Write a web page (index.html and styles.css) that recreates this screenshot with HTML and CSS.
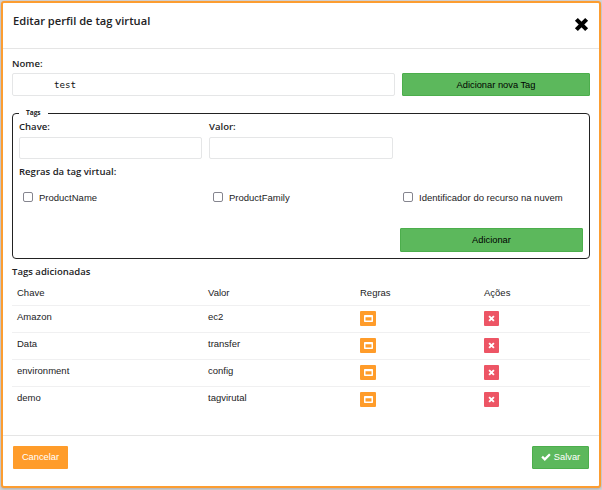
FILE: index.html
```html
<!DOCTYPE html>
<html lang="pt">
<head>
<meta charset="utf-8">
<title>Editar perfil de tag virtual</title>
<link rel="stylesheet" href="styles.css">
</head>
<body>
<svg width="0" height="0" class="defs">
  <symbol id="times" viewBox="0 0 12 12"><path d="M1.900 1.900l8.200 8.200M10.100 1.900l-8.200 8.200" fill="none" stroke="currentColor" stroke-width="3.300"/></symbol>
  <symbol id="window" viewBox="0 0 9 8"><path fill-rule="evenodd" fill="currentColor" d="M.8 0h7.400q.8 0 .8.8v5.400q0 .8-.8.8H.8Q0 7 0 6.200V.8Q0 0 .8 0zM1.500 2.300v3.200h6V2.300z"/></symbol>
  <symbol id="check" viewBox="0 0 10 8"><path d="M1.100 3.700l2.700 2.600L8.900 1.200" fill="none" stroke="currentColor" stroke-width="2.300"/></symbol>
</svg>
<div class="modal">
  <header class="modal-header">
    <h1>Editar perfil de tag virtual</h1>
    <button class="close" aria-label="Fechar"><svg><use href="#times"/></svg></button>
  </header>
  <main class="modal-body">
    <label class="label name-label">Nome:</label>
    <div class="name-row">
      <input class="input name" value="test">
      <button class="btn green wide">Adicionar nova Tag</button>
    </div>
    <fieldset class="tags">
      <legend>Tags</legend>
      <div class="fields">
        <label class="label">Chave:<input class="input"></label>
        <label class="label">Valor:<input class="input"></label>
      </div>
      <div class="label rules-label">Regras da tag virtual:</div>
      <div class="rules">
        <label><input type="checkbox"><span>ProductName</span></label>
        <label><input type="checkbox"><span>ProductFamily</span></label>
        <label><input type="checkbox"><span>Identificador do recurso na nuvem</span></label>
      </div>
      <button class="btn green add">Adicionar</button>
    </fieldset>
    <h2 class="label">Tags adicionadas</h2>
    <div class="table">
      <div class="row head"><span>Chave</span><span>Valor</span><span>Regras</span><span>Ações</span></div>
      <div class="row"><span>Amazon</span><span>ec2</span><button class="icon orange"><svg><use href="#window"/></svg></button><button class="icon red"><svg><use href="#times"/></svg></button></div>
      <div class="row"><span>Data</span><span>transfer</span><button class="icon orange"><svg><use href="#window"/></svg></button><button class="icon red"><svg><use href="#times"/></svg></button></div>
      <div class="row"><span>environment</span><span>config</span><button class="icon orange"><svg><use href="#window"/></svg></button><button class="icon red"><svg><use href="#times"/></svg></button></div>
      <div class="row"><span>demo</span><span>tagvirutal</span><button class="icon orange"><svg><use href="#window"/></svg></button><button class="icon red"><svg><use href="#times"/></svg></button></div>
    </div>
  </main>
  <footer class="modal-footer">
    <button class="btn orange cancel">Cancelar</button>
    <button class="btn green save"><svg><use href="#check"/></svg>Salvar</button>
  </footer>
</div>
</body>
</html>
```
FILE: styles.css
```css
* { box-sizing: border-box; }
body { margin: 0; padding: 1px; height: 490px; overflow: hidden; background: #d6d6d8; font: 9.5px/12px "Liberation Sans", sans-serif; color: #222224; }
.defs { display: none; }
button, input { font: inherit; margin: 0; padding: 0; }
h1, h2 { margin: 0; }
svg { display: block; }
.modal { width: 600px; height: 487px; border: 2px solid #fc9d31; border-radius: 3px; background: #fff; display: flex; flex-direction: column; box-shadow: 0 1px 3px #aaa; }
.modal-header { height: 46px; flex: none; border-bottom: 1px solid #e5e5e5; display: flex; justify-content: space-between; padding: 10px 10px 0; }
h1 { font: 600 11.15px/16px "Open Sans", sans-serif; white-space: nowrap; }
.close { width: 15px; height: 15px; margin: 4px 0 0; border: 0; background: none; color: #000; }
.close svg { width: 15px; height: 15px; }
.modal-body { flex: 1; padding: 9px 9px 0; }
.label { display: block; font: 600 9.55px/13px "Open Sans", sans-serif; }
.name-label { height: 15px; line-height: 12px; }
.name-row { display: grid; grid-template-columns: 383px 188px; gap: 7px; height: 23px; }
.input { display: block; width: 100%; height: 23px; border: 1px solid #e5e6e7; border-radius: 2px; background: #fff; }
.name { padding-left: 41px; font: 9.2px "DejaVu Sans Mono", monospace; color: #111; }
.btn { border: 1px solid transparent; border-radius: 1px; display: flex; align-items: center; justify-content: center; height: 23px; font-size: 9.3px; }
.green { background: #5cb85c; border-color: #4cae4c; color: #000; }
.orange { background: #ff9c2a; color: #fff; }
.red { background: #ed5565; color: #fff; }
.tags { margin: 13px 0 0; padding: 0 6px; height: 150px; border: 1px solid #222; border-radius: 4px; min-width: 0; width: 578px; }
legend { font: 700 6.5px/8px "Open Sans", sans-serif; padding: 0 7px; height: 8px; }
.fields { display: grid; grid-template-columns: 183px 184px; gap: 7px; margin-top: 3px; }
.fields .input { margin-top: 4px; height: 22px; }
.rules-label { margin-top: 6px; }
.rules { display: grid; grid-template-columns: 190px 190px 180px; margin-top: 13px; }
.rules label { display: flex; align-items: center; padding-left: 4px; height: 12px; white-space: nowrap; }
.rules input { appearance: none; width: 10px; height: 10px; border: 1px solid #85858f; border-radius: 2px; margin: 0 6px 1px 0; }
.rules span { position: relative; top: 1px; }
.add { width: 183px; height: 24px; margin: 25px 0 0 auto; }
h2.label { margin-top: 6px; }
.row { display: grid; grid-template-columns: 191px 152px 124px 100px; padding: 5px 5px 0; height: 27px; border-top: 1px solid #f0f0f1; }
.row.head { border-top: 0; height: 27px; padding-top: 9px; }
.icon { width: 16px; height: 15px; border: 0; border-radius: 1px; display: flex; align-items: center; justify-content: center; }
.icon.red { width: 15px; }
.icon svg { width: 9px; height: 8px; }
.icon.red svg { width: 7px; height: 7px; }
.modal-footer { height: 51px; flex: none; border-top: 1px solid #e5e5e5; padding: 10px 10px 0; display: flex; justify-content: space-between; }
.cancel { width: 55px; padding-bottom: 1px; }
.save { width: 57px; gap: 3px; color: #fff; padding-bottom: 1px; }
.save svg { width: 10px; height: 8px; }
```
